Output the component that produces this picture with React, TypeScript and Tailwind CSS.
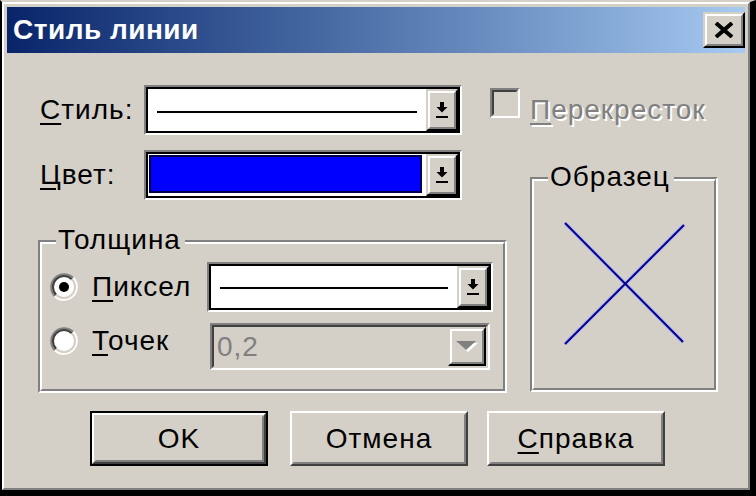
import React from "react";

const F = "font-['Liberation_Sans',Arial,sans-serif]";

function Raised({ className = "", children }: { className?: string; children?: React.ReactNode }) {
  return (
    <div className={`flex border-2 border-t-[#d4d0c8] border-l-[#d4d0c8] border-r-black border-b-black ${className}`}>
      <div className="flex flex-1 items-center justify-center border-2 border-t-white border-l-white border-r-[#808080] border-b-[#808080] bg-[#d4d0c8]">
        {children}
      </div>
    </div>
  );
}

function DownArrow() {
  return (
    <svg width="12" height="16" viewBox="0 0 12 16">
      <rect x="4" y="0" width="4" height="5" fill="#000" />
      <polygon points="0.5,5 11.5,5 6,10.5" fill="#000" />
      <rect x="0" y="14" width="12" height="2" fill="#000" />
    </svg>
  );
}

function GreyTri() {
  return (
    <svg width="22" height="11" viewBox="0 0 22 11">
      <polygon points="2,2 22,2 12,11" fill="#ffffff" />
      <polygon points="0,0 20,0 10,9" fill="#808080" />
    </svg>
  );
}

function CloseX() {
  return (
    <svg width="20" height="16" viewBox="0 0 20 16">
      <line x1="2" y1="1" x2="18" y2="15" stroke="#000" strokeWidth="4" />
      <line x1="18" y1="1" x2="2" y2="15" stroke="#000" strokeWidth="4" />
    </svg>
  );
}

function Combo({ className, children }: { className: string; children?: React.ReactNode }) {
  return (
    <div className={`flex border-2 border-t-[#808080] border-l-[#808080] border-r-white border-b-white ${className}`}>
      <div className="flex flex-1 border-2 border-black bg-white">
        <div className="flex flex-1 items-center">{children}</div>
        <Raised className="w-[32px]">
          <DownArrow />
        </Raised>
      </div>
    </div>
  );
}

function GroupBox({
  title,
  className,
  labelClass,
  children,
}: {
  title: string;
  className: string;
  labelClass: string;
  children?: React.ReactNode;
}) {
  return (
    <div className={`relative flex border-2 border-t-[#808080] border-l-[#808080] border-r-white border-b-white ${className}`}>
      <div className="flex flex-1 flex-col border-2 border-t-white border-l-white border-r-[#808080] border-b-[#808080]">
        {children}
      </div>
      <span className={`absolute top-[-18px] bg-[#d4d0c8] pl-[2px] pr-[4px] text-[28px] leading-[32px] ${labelClass}`}>
        {title}
      </span>
    </div>
  );
}

function Radio({ checked }: { checked: boolean }) {
  return (
    <svg width="28" height="28" viewBox="0 0 28 28">
      <circle cx="14" cy="14" r="11" fill="#ffffff" />
      <path d="M4.81 23.19 A13 13 0 0 1 23.19 4.81" stroke="#808080" strokeWidth="2" fill="none" />
      <path d="M23.19 4.81 A13 13 0 0 1 4.81 23.19" stroke="#ffffff" strokeWidth="2" fill="none" />
      <path d="M6.22 21.78 A11 11 0 0 1 21.78 6.22" stroke="#404040" strokeWidth="2" fill="none" />
      <path d="M21.78 6.22 A11 11 0 0 1 6.22 21.78" stroke="#d4d0c8" strokeWidth="2" fill="none" />
      {checked && <circle cx="14" cy="14" r="5" fill="#000" />}
    </svg>
  );
}

function U({ c }: { c: string }) {
  return <span className="underline decoration-2 underline-offset-[4px]">{c}</span>;
}

function Button({ children, def }: { children: React.ReactNode; def?: boolean }) {
  const inner = (
    <div className="flex flex-1 border-2 border-t-white border-l-white border-r-[#404040] border-b-[#404040]">
      <div className="flex flex-1 items-center justify-center border-2 border-t-[#d4d0c8] border-l-[#d4d0c8] border-r-[#808080] border-b-[#808080] text-[28px] leading-[32px]">
        {children}
      </div>
    </div>
  );
  if (def) {
    return <div className="flex h-[55px] w-[178px] border-2 border-black">{inner}</div>;
  }
  return <div className="flex h-[55px] w-[178px]">{inner}</div>;
}

export default function App() {
  return (
    <div className={`h-[496px] w-[756px] bg-[#d4d0c8] tracking-[1px] text-black ${F}`}>
      <div className="flex h-full flex-col border-t-2 border-l-2 border-r-[6px] border-b-[6px] border-t-[#d4d0c8] border-l-black border-r-black border-b-black">
        <div className="flex flex-1 flex-col border-2 border-t-white border-l-white border-r-[#808080] border-b-[#808080]">
          {/* Title bar */}
          <div className="mx-[3px] mt-[3px] flex h-[46px] items-center bg-linear-to-r from-[#0a246a] to-[#a6caf0] pl-[6px]">
            <span className="flex-1 text-[28px] font-bold leading-[32px] tracking-[0.5px] text-white">Стиль линии</span>
            <Raised className="h-[36px] w-[42px]">
              <CloseX />
            </Raised>
          </div>

          {/* Body */}
          <div className="flex pl-[34px]">
            {/* Left column */}
            <div className="flex w-[469px] flex-col">
              <div className="mt-[32px] flex h-[50px] items-center">
                <span className="w-[106px] pl-[2px] text-[28px] leading-[32px]">
                  <U c="С" />
                  тиль:
                </span>
                <Combo className="h-[50px] w-[318px]">
                  <div className="ml-[9px] mr-[9px] mt-[4px] h-[2px] flex-1 bg-black" />
                </Combo>
              </div>
              <div className="mt-[15px] flex h-[50px] items-center">
                <span className="w-[106px] pl-[2px] text-[28px] leading-[32px]">
                  <U c="Ц" />
                  вет:
                </span>
                <Combo className="h-[50px] w-[318px]">
                  <div className="flex h-full flex-1 pb-[3px] pl-[1px] pr-[4px] pt-[1px]">
                    <div className="flex-1 border-2 border-[#00004a] bg-[#0000ff]" />
                  </div>
                </Combo>
              </div>

              <GroupBox title="Толщина" className="mt-[40px] h-[153px] w-[469px]" labelClass="left-[16px]">
                <div className="mt-[18px] flex h-[50px] items-center pl-[8px]">
                  <Radio checked />
                  <span className="ml-[14px] w-[115px] text-[28px] leading-[32px]">
                    <U c="П" />
                    иксел
                  </span>
                  <Combo className="h-[50px] w-[286px]">
                    <div className="ml-[9px] mr-[9px] mt-[2px] h-[2px] flex-1 bg-black" />
                  </Combo>
                </div>
                <div className="mt-[11px] flex h-[47px] items-center pl-[8px]">
                  <div className="mb-[11px] flex items-center">
                    <Radio checked={false} />
                    <span className="ml-[14px] w-[115px] text-[28px] leading-[32px]">
                      <U c="Т" />
                      очек
                    </span>
                  </div>
                  <div className="ml-[3px] flex h-[47px] w-[280px] border-2 border-t-[#808080] border-l-[#808080] border-r-white border-b-white">
                    <div className="flex flex-1 border-2 border-t-[#404040] border-l-[#404040] border-r-[#d4d0c8] border-b-[#d4d0c8] bg-[#d4d0c8]">
                      <div className="flex flex-1 items-center pl-[3px] text-[28px] leading-[32px] text-[#808080]">
                        0,2
                      </div>
                      <Raised className="w-[38px]">
                        <GreyTri />
                      </Raised>
                    </div>
                  </div>
                </div>
              </GroupBox>
            </div>

            {/* Right column */}
            <div className="ml-[-17px] flex w-[228px] flex-col">
              <div className="mt-[32px] flex h-[50px] items-center">
                <div className="mb-[14px] flex h-[30px] w-[30px] border-2 border-t-[#808080] border-l-[#808080] border-r-white border-b-white">
                  <div className="flex-1 border-2 border-t-[#404040] border-l-[#404040] border-r-[#d4d0c8] border-b-[#d4d0c8] bg-[#d4d0c8]" />
                </div>
                <span className="ml-[10px] text-[28px] leading-[32px] text-[#808080] [text-shadow:2px_2px_0_#ffffff]">
                  <U c="П" />
                  ерекресток
                </span>
              </div>
              <GroupBox title="Образец" className="ml-[40px] mt-[42px] h-[215px] w-[188px]" labelClass="left-[16px]">
                <svg width="180" height="207" viewBox="0 0 180 207">
                  <line x1="31" y1="42" x2="149" y2="161" stroke="#b8b8f0" strokeWidth="4" />
                  <line x1="150" y1="44" x2="31" y2="163" stroke="#b8b8f0" strokeWidth="4" />
                  <line x1="31" y1="42" x2="149" y2="161" stroke="#00008a" strokeWidth="2" />
                  <line x1="150" y1="44" x2="31" y2="163" stroke="#00008a" strokeWidth="2" />
                </svg>
              </GroupBox>
            </div>
          </div>

          {/* Buttons */}
          <div className="mt-[18px] flex pl-[86px]">
            <Button def>OK</Button>
            <div className="ml-[22px]">
              <Button>Отмена</Button>
            </div>
            <div className="ml-[19px]">
              <Button>
                <U c="С" />
                правка
              </Button>
            </div>
          </div>
        </div>
      </div>
    </div>
  );
}
